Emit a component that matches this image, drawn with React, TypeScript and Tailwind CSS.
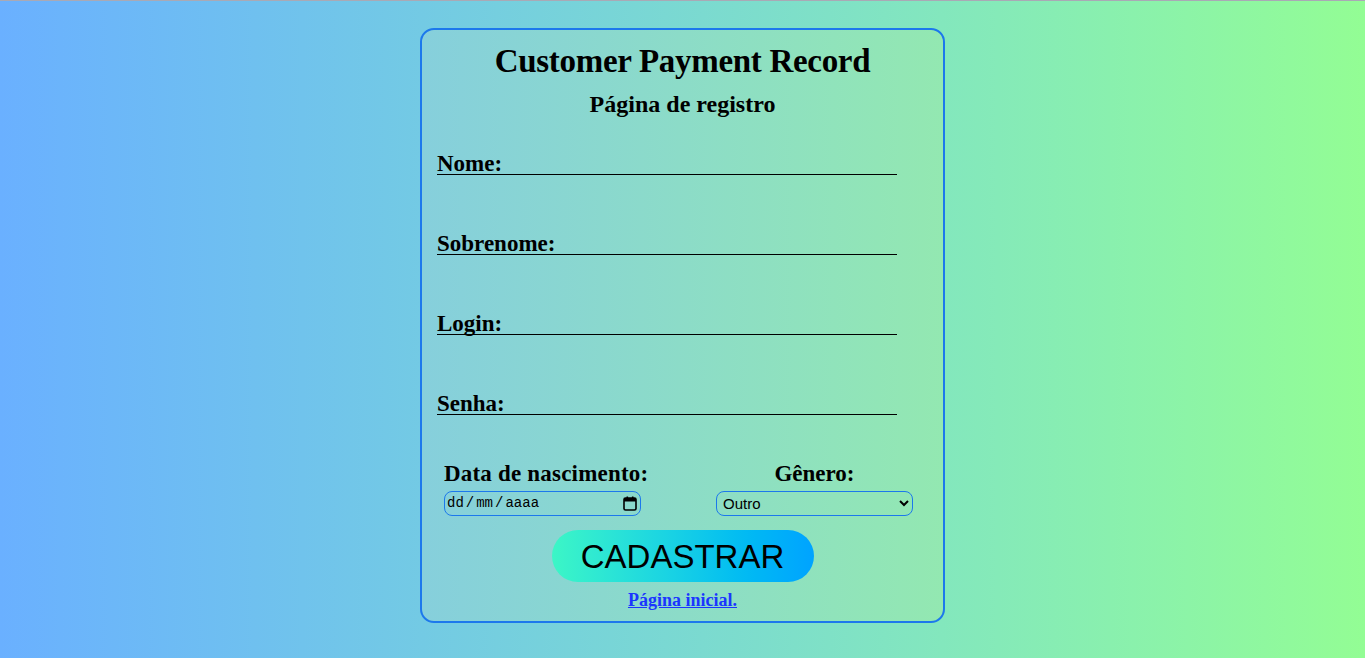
export default function App() {
  const fields = ["Nome:", "Sobrenome:", "Login:", "Senha:"];
  return (
    <div className="min-h-[658px] w-full border-t border-[#a9a9b5] bg-gradient-to-r from-[#6ab0ff] to-[#93fd94] pt-[27px] [font-family:'Liberation_Serif',serif]">
      <div className="mx-auto h-[595px] w-[525px] rounded-[14px] border-2 border-[#1c78ec] bg-gradient-to-r from-[#86cfdc] to-[#93e8b1] px-[15px] text-black">
        <h1 className="mt-[9px] text-center text-[33px] font-bold leading-[44px] tracking-[-0.3px]">
          Customer Payment Record
        </h1>
        <h2 className="mt-[5px] text-center text-[24px] font-bold leading-[32px]">Página de registro</h2>

        <div className="mt-[29px] flex flex-col gap-[54px]">
          {fields.map((f) => (
            <div key={f} className="flex h-[26px] w-[460px] items-end border-b border-black">
              <label className="text-[23px] font-bold leading-[20px]">{f}</label>
              <input
                type={f === "Senha:" ? "password" : "text"}
                className="flex-1 bg-transparent outline-none"
              />
            </div>
          ))}
        </div>

        <div className="mt-[44px] flex justify-between px-[7px]">
          <div className="flex w-[215px] flex-col">
            <label className="text-[23px] font-bold leading-[30px] tracking-[0.2px]">Data de nascimento:</label>
            <div className="mt-[2px] flex h-[25px] w-[197px] items-center justify-between rounded-[8px] border border-[#1c78ec] pl-[2px] pr-[3px] text-[14px] [font-family:'Liberation_Mono',monospace]">
              <span>
                dd<span className="mx-[2px]">/</span>mm<span className="mx-[2px]">/</span>aaaa
              </span>
              <svg width="14" height="15" viewBox="0 0 14 15" fill="none">
                <rect x="1" y="2" width="12" height="12" rx="1.5" stroke="black" strokeWidth="1.6" />
                <rect x="1" y="2" width="12" height="3.5" fill="black" />
                <rect x="3.5" y="0.5" width="1.6" height="3" fill="black" />
                <rect x="8.9" y="0.5" width="1.6" height="3" fill="black" />
              </svg>
            </div>
          </div>
          <div className="mr-[8px] flex w-[197px] flex-col items-center">
            <label className="text-[23px] font-bold leading-[30px]">Gênero:</label>
            <select
              defaultValue="Outro"
              className="mt-[2px] h-[25px] w-[197px] rounded-[8px] border border-[#1c78ec] bg-transparent px-[2px] text-[15px] [font-family:'Liberation_Sans',sans-serif]"
            >
              <option>Masculino</option>
              <option>Feminino</option>
              <option>Outro</option>
            </select>
          </div>
        </div>

        <div className="mt-[14px] flex flex-col items-center">
          <button className="h-[52px] w-[262px] rounded-full bg-gradient-to-r from-[#3cf6c6] to-[#00a3ff] text-[33px] leading-none [font-family:'Liberation_Sans',sans-serif]">
            CADASTRAR
          </button>
          <a href="#" className="mt-[6px] text-[18px] font-bold leading-[24px] text-[#1a35ff] underline">
            Página inicial.
          </a>
        </div>
      </div>
    </div>
  );
}
